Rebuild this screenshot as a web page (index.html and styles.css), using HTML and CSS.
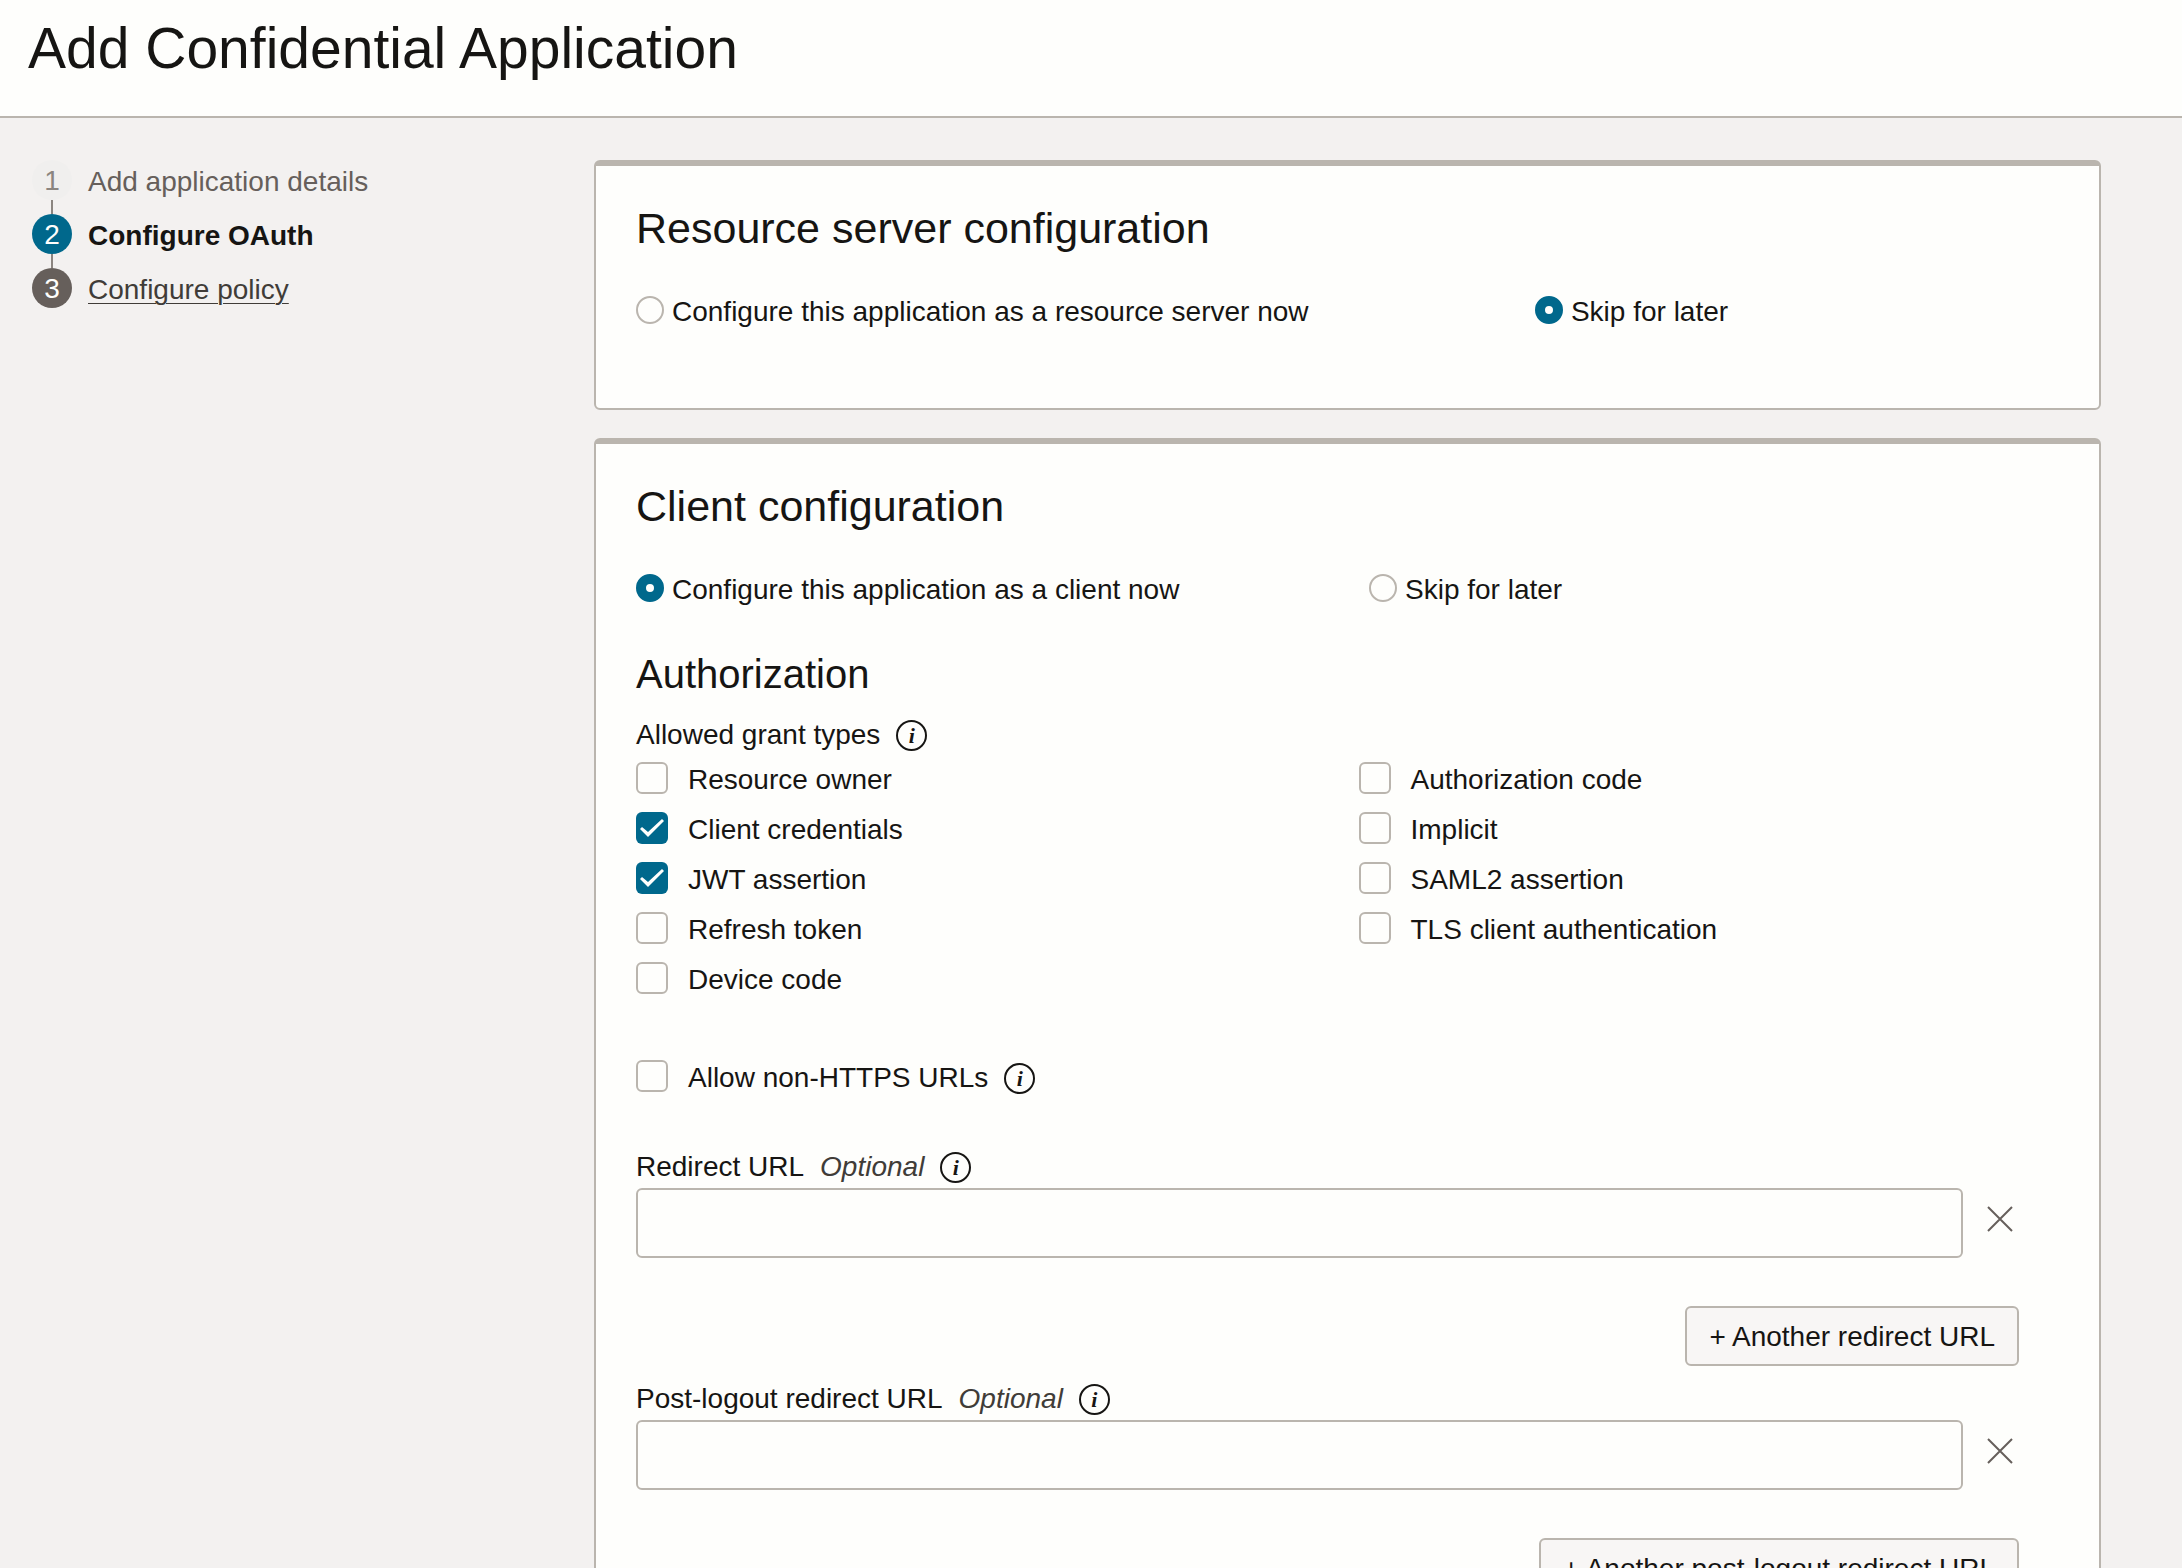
FILE: index.html
```html
<!DOCTYPE html>
<html lang="en">
<head>
<meta charset="utf-8">
<title>Add Confidential Application</title>
<link rel="stylesheet" href="styles.css">
</head>
<body>
<header class="page-header">
  <h1>Add Confidential Application</h1>
</header>
<div class="workspace">
  <nav class="wizard" aria-label="Steps">
    <ol class="steps">
      <li class="step step-done"><span class="step-number">1</span><span class="step-label">Add application details</span></li>
      <li class="step step-current" aria-current="step"><span class="step-number">2</span><span class="step-label">Configure OAuth</span></li>
      <li class="step"><span class="step-number">3</span><a class="step-label" href="#policy">Configure policy</a></li>
    </ol>
  </nav>
  <main class="cards">
    <section class="card card-short">
      <h2>Resource server configuration</h2>
      <div class="radios radios-resource">
        <label class="radio"><input type="radio" name="resource">Configure this application as a resource server now</label>
        <label class="radio"><input type="radio" name="resource" checked>Skip for later</label>
      </div>
    </section>
    <section class="card">
      <h2>Client configuration</h2>
      <div class="radios radios-client">
        <label class="radio"><input type="radio" name="client" checked>Configure this application as a client now</label>
        <label class="radio"><input type="radio" name="client">Skip for later</label>
      </div>
      <h3>Authorization</h3>
      <div class="caption"><span>Allowed grant types</span><button class="info" type="button" aria-label="About grant types"><i>i</i></button></div>
      <div class="grants">
        <div class="checks">
          <label class="check"><input type="checkbox">Resource owner</label>
          <label class="check"><input type="checkbox" checked>Client credentials</label>
          <label class="check"><input type="checkbox" checked>JWT assertion</label>
          <label class="check"><input type="checkbox">Refresh token</label>
          <label class="check"><input type="checkbox">Device code</label>
        </div>
        <div class="checks">
          <label class="check"><input type="checkbox">Authorization code</label>
          <label class="check"><input type="checkbox">Implicit</label>
          <label class="check"><input type="checkbox">SAML2 assertion</label>
          <label class="check"><input type="checkbox">TLS client authentication</label>
        </div>
      </div>
      <div class="non-https">
        <label class="check"><input type="checkbox">Allow non-HTTPS URLs</label>
        <button class="info" type="button" aria-label="About non-HTTPS URLs"><i>i</i></button>
      </div>
      <div class="field">
        <div class="caption"><label for="redirect">Redirect URL</label><em>Optional</em><button class="info" type="button" aria-label="About redirect URL"><i>i</i></button></div>
        <div class="entry">
          <input class="text-box" id="redirect" type="text">
          <button class="remove" type="button" aria-label="Remove redirect URL"><svg viewBox="0 0 28 28" width="28" height="28"><path d="M2 2 26 26M26 2 2 26"/></svg></button>
        </div>
        <button class="add" type="button">+ Another redirect URL</button>
      </div>
      <div class="field">
        <div class="caption"><label for="logout">Post-logout redirect URL</label><em>Optional</em><button class="info" type="button" aria-label="About post-logout redirect URL"><i>i</i></button></div>
        <div class="entry">
          <input class="text-box" id="logout" type="text">
          <button class="remove" type="button" aria-label="Remove post-logout redirect URL"><svg viewBox="0 0 28 28" width="28" height="28"><path d="M2 2 26 26M26 2 2 26"/></svg></button>
        </div>
        <button class="add" type="button">+ Another post-logout redirect URL</button>
      </div>
    </section>
  </main>
</div>
</body>
</html>
```
FILE: styles.css
```css
:root {
  --ink: #161513;
  --paper: #fefefc;
  --canvas: #f3f1f0;
  --line: #bab5ae;
  --accent: #00688c;
  --muted: #665f5b;
}

* { box-sizing: border-box; }

body {
  margin: 0;
  height: 100vh;
  display: flex;
  flex-direction: column;
  background: var(--canvas);
  color: var(--ink);
  font: 28px/36px "Liberation Sans", Arial, sans-serif;
}

button, input { font: inherit; color: inherit; margin: 0; }
button { cursor: pointer; }
h1, h2, h3 { margin: 0; font-weight: 400; }

.page-header {
  flex: none;
  padding: 16px 28px 36px;
  background: var(--paper);
  border-bottom: 2px solid var(--line);
}
h1 { font-size: 57px; line-height: 64px; }

.workspace {
  flex: 1;
  min-height: 0;
  display: grid;
  grid-template-columns: 594px 1fr;
  align-items: start;
  padding: 42px 81px 0 0;
  overflow-y: auto;
  scrollbar-width: none;
}

.steps {
  list-style: none;
  margin: 0;
  padding: 0 32px;
  display: flex;
  flex-direction: column;
  gap: 10px;
}
.step { display: flex; align-items: flex-start; gap: 16px; line-height: 44px; position: relative; }
.step-number {
  width: 40px;
  height: 40px;
  border-radius: 50%;
  background: var(--muted);
  color: var(--paper);
  line-height: 42px;
  text-align: center;
}
.step-label { color: #403c38; text-underline-offset: 4px; text-decoration-thickness: 1px; }
.step-done .step-number { background: #f0efee; color: #8b8580; }
.step-done .step-label { color: var(--muted); }
.step-current .step-number { background: var(--accent); }
.step-current .step-label { color: var(--ink); font-weight: 700; }
.step + .step::before {
  content: "";
  position: absolute;
  left: 19px;
  top: -14px;
  width: 2px;
  height: 14px;
  background: #8b8580;
}

.cards { display: flex; flex-direction: column; gap: 28px; }
.card {
  background: var(--paper);
  border: 2px solid var(--line);
  border-top-width: 6px;
  border-radius: 6px;
  padding: 38px 80px 40px 40px;
}
.card-short { padding-bottom: 78px; }
h2 { font-size: 43px; line-height: 48px; margin-bottom: 42px; }
h3 { font-size: 40px; line-height: 48px; margin: 42px 0 20px; }

.radios { display: grid; }
.radios-resource { grid-template-columns: 65% 1fr; }
.radios-client { grid-template-columns: 53% 1fr; }
.radio { display: flex; align-items: flex-start; gap: 8px; white-space: nowrap; }
.radio input {
  appearance: none;
  flex: none;
  width: 28px;
  height: 28px;
  margin-top: 2px;
  border: 2px solid var(--line);
  border-radius: 50%;
}
.radio input:checked { border: 10px solid var(--accent); background: var(--paper); }

.caption { display: flex; align-items: center; line-height: 34px; }
.caption em { color: #403c38; margin-left: 16px; }
.info {
  flex: none;
  width: 31px;
  height: 31px;
  margin-left: 16px;
  padding: 0;
  border: 2px solid var(--ink);
  border-radius: 50%;
  background: none;
  font: italic 700 22px/27px "Liberation Serif", serif;
}

.grants { display: grid; grid-template-columns: 1fr 1fr; column-gap: 62px; margin-top: 10px; }
.checks { display: flex; flex-direction: column; gap: 14px; }
.check { display: flex; align-items: flex-start; gap: 20px; }
.check input {
  appearance: none;
  flex: none;
  width: 32px;
  height: 32px;
  border: 2px solid var(--line);
  border-radius: 6px;
}
.check input:checked { border: 0; background: var(--accent); }
.check input:checked::before {
  content: "";
  display: block;
  width: 32px;
  height: 32px;
  background: var(--paper);
  clip-path: polygon(4px 17px, 6px 15px, 12px 20px, 26px 7px, 28px 9px, 12px 25px);
}
.non-https { display: flex; align-items: center; margin: 62px 0 54px; }

.field { display: flex; flex-direction: column; margin-bottom: 16px; }
.entry { display: flex; align-items: center; margin-top: 4px; }
.text-box {
  flex: 1;
  min-width: 0;
  height: 70px;
  padding: 0 16px;
  border: 2px solid var(--line);
  border-radius: 6px;
  background: var(--paper);
}
.remove {
  display: flex;
  width: 56px;
  padding: 0 5px 8px 23px;
  border: 0;
  background: none;
}
.remove svg { flex: none; fill: none; stroke: var(--muted); stroke-width: 2; }
.add {
  align-self: flex-end;
  height: 60px;
  margin-top: 48px;
  padding: 2px 22px 0;
  border: 2px solid var(--line);
  border-radius: 6px;
  background: #f8f6f5;
}
```
